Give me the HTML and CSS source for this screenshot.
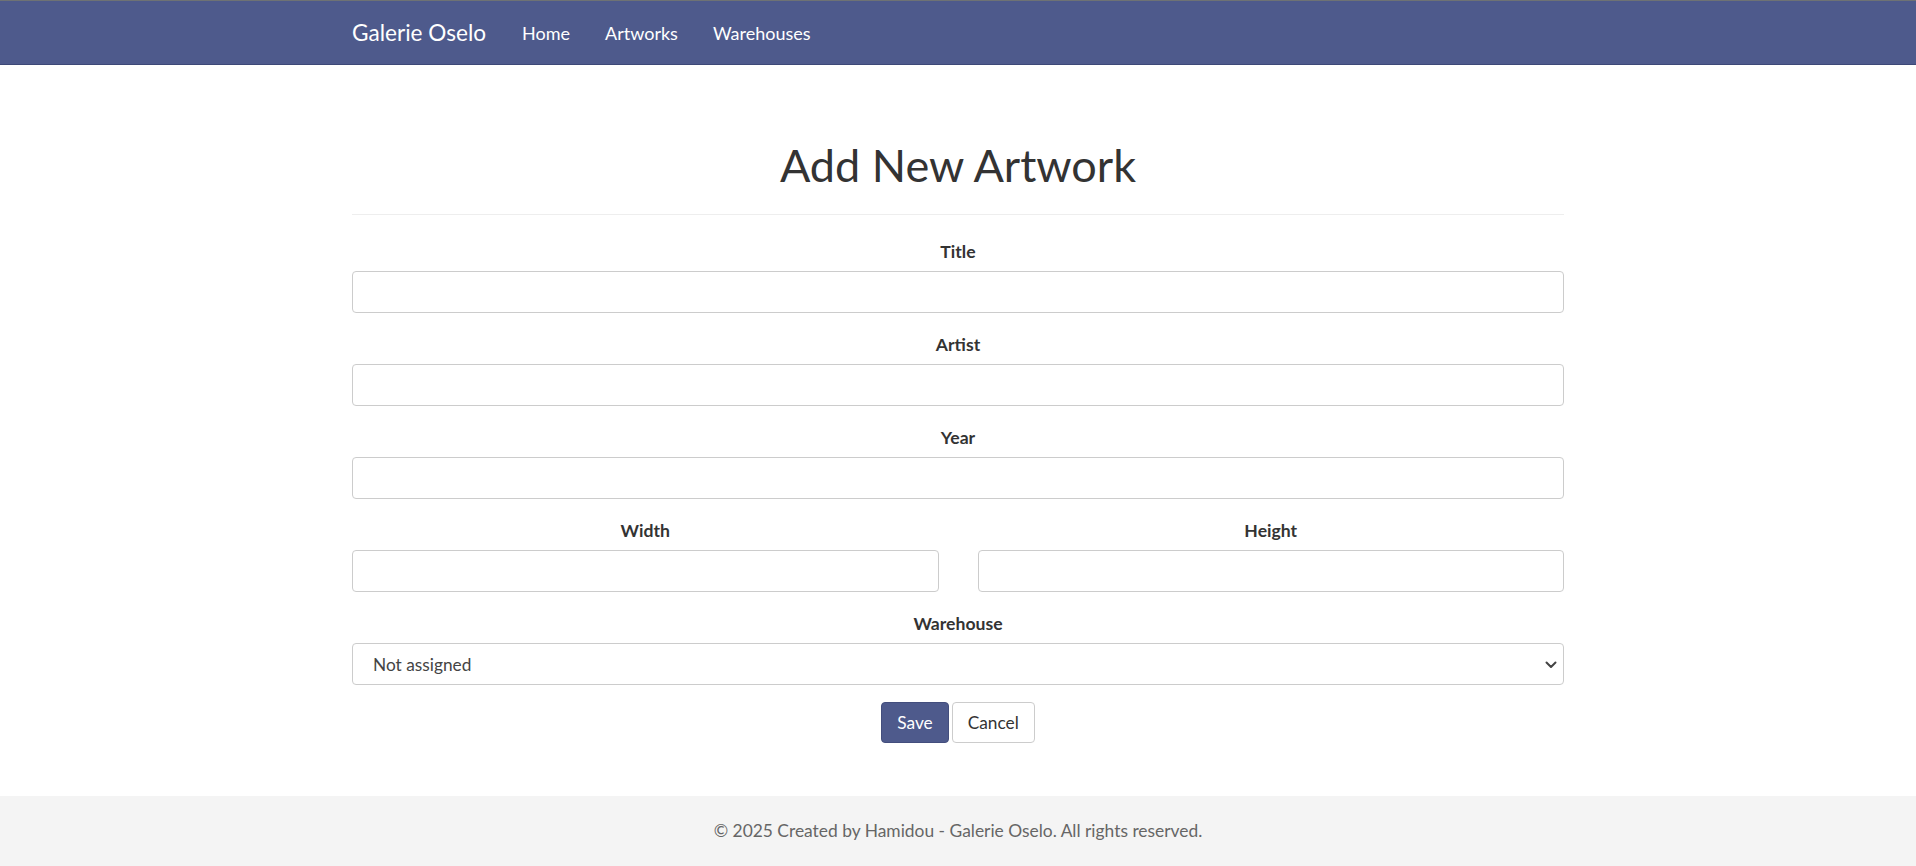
FILE: index.html
```html
<!DOCTYPE html>
<html lang="en">
<head>
<meta charset="utf-8">
<title>Add New Artwork - Galerie Oselo</title>
<link rel="stylesheet" href="styles.css">
</head>
<body>
<header class="navbar">
  <div class="container nav-inner">
    <a class="brand" href="#">Galerie Oselo</a>
    <nav class="nav-links">
      <a href="#">Home</a>
      <a href="#">Artworks</a>
      <a href="#">Warehouses</a>
    </nav>
  </div>
</header>
<main class="container main">
  <h1 class="page-title">Add New Artwork</h1>
  <hr class="divider">
  <form class="artwork-form">
    <div class="form-group">
      <label for="title">Title</label>
      <input id="title" class="form-control" type="text">
    </div>
    <div class="form-group">
      <label for="artist">Artist</label>
      <input id="artist" class="form-control" type="text">
    </div>
    <div class="form-group">
      <label for="year">Year</label>
      <input id="year" class="form-control" type="text">
    </div>
    <div class="form-row">
      <div class="form-group">
        <label for="width">Width</label>
        <input id="width" class="form-control" type="text">
      </div>
      <div class="form-group">
        <label for="height">Height</label>
        <input id="height" class="form-control" type="text">
      </div>
    </div>
    <div class="form-group">
      <label for="warehouse">Warehouse</label>
      <div class="select-wrap">
        <select id="warehouse" class="form-control form-select">
          <option>Not assigned</option>
        </select>
        <svg class="select-arrow" width="12" height="8" viewBox="0 0 12 8"><path d="M1.5 1.5 L6 6 L10.5 1.5" fill="none" stroke="#444" stroke-width="2" stroke-linecap="round" stroke-linejoin="round"/></svg>
      </div>
    </div>
    <div class="actions">
      <button type="button" class="btn btn-primary">Save</button>
      <button type="button" class="btn btn-default">Cancel</button>
    </div>
  </form>
</main>
<footer class="footer">
  <p>© 2025 Created by Hamidou - Galerie Oselo. All rights reserved.</p>
</footer>
</body>
</html>
```

FILE: styles.css
```css
* { box-sizing: border-box; }
html, body { margin: 0; padding: 0; }
body {
  font-family: Lato, "Noto Sans", sans-serif;
  font-size: 17.4px;
  line-height: 24px;
  color: #333;
  background: #fff;
}
.container {
  width: 1212px;
  margin: 0 auto;
}
.navbar {
  background: #4e5a8c;
  border-top: 1px solid #6e7274;
  border-bottom: 1px solid #3d4877;
  height: 65px;
}
.nav-inner {
  display: flex;
  align-items: center;
  height: 100%;
}
.brand {
  color: #fff;
  font-size: 22.6px;
  text-decoration: none;
  margin-right: 36px;
  line-height: 30px;
}
.nav-links {
  display: flex;
  gap: 35px;
}
.nav-links a {
  color: #fff;
  text-decoration: none;
  font-size: 18px;
}
.main {
  padding-top: 72px;
  padding-bottom: 53px;
}
.page-title {
  margin: 0;
  text-align: center;
  font-size: 45px;
  font-weight: 400;
  line-height: 57px;
  color: #333;
}
.divider {
  border: 0;
  border-top: 1px solid #eee;
  margin: 20px 0 25px;
}
.form-group {
  display: flex;
  flex-direction: column;
  margin-bottom: 20px;
}
.form-group label {
  text-align: center;
  font-weight: 700;
  font-size: 17.6px;
  line-height: 24px;
  margin-bottom: 7px;
}
.form-row {
  display: grid;
  grid-template-columns: 1fr 1fr;
  gap: 39px;
}
.form-control {
  display: block;
  width: 100%;
  height: 42px;
  padding: 8px 16px;
  font-family: inherit;
  font-size: 17.3px;
  color: #444;
  background: #fff;
  border: 1px solid #ccc;
  border-radius: 4px;
}
.select-wrap { position: relative; }
.form-select {
  appearance: none;
  -webkit-appearance: none;
  padding-left: 20px;
}
.select-arrow {
  position: absolute;
  right: 7px;
  top: 18px;
  pointer-events: none;
}
.actions {
  display: flex;
  justify-content: center;
  gap: 3px;
  margin-top: -3px;
}
.btn {
  font-family: inherit;
  font-size: 17.3px;
  line-height: 24px;
  padding: 7px 15px;
  height: 41px;
  border-radius: 4px;
  cursor: pointer;
}
.btn-primary {
  background: #4e5a8c;
  color: #fff;
  border: 1px solid #434e7d;
}
.btn-default {
  background: #fff;
  color: #333;
  border: 1px solid #ccc;
}
.footer {
  background: #f4f4f4;
  height: 70px;
  display: flex;
  align-items: center;
  justify-content: center;
}
.footer p {
  margin: 0;
  color: #666;
  font-size: 17.4px;
}
```
